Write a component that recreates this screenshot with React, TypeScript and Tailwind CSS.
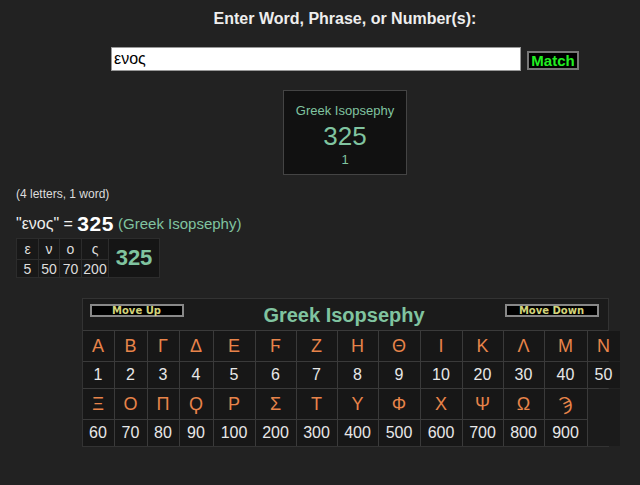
import React from "react";

const top1 = [
  ["Α", "1"], ["Β", "2"], ["Γ", "3"], ["Δ", "4"], ["Ε", "5"], ["Ϝ", "6"], ["Ζ", "7"],
  ["Η", "8"], ["Θ", "9"], ["Ι", "10"], ["Κ", "20"], ["Λ", "30"], ["Μ", "40"], ["Ν", "50"],
];
const top2 = [
  ["Ξ", "60"], ["Ο", "70"], ["Π", "80"], ["Ϙ", "90"], ["Ρ", "100"], ["Σ", "200"], ["Τ", "300"],
  ["Υ", "400"], ["Φ", "500"], ["Χ", "600"], ["Ψ", "700"], ["Ω", "800"], ["Ϡ", "900"],
];

export default function App() {
  const font = { fontFamily: '"Liberation Sans", Arial, "DejaVu Sans", sans-serif' };
  const btnFont = { fontFamily: '"DejaVu Sans", Verdana, sans-serif' };
  return (
    <div className="min-h-[485px] w-[640px] bg-[#222222] text-[#dddddd]" style={font}>
      <div className="flex flex-col items-center pl-[50px] pt-[10px]">
        <div className="text-[16px] font-bold leading-[18px] text-[#eeeeee]">Enter Word, Phrase, or Number(s):</div>
        <div className="mt-[19px] flex items-center gap-[6px]">
          <div className="flex h-[24px] w-[410px] items-center border border-[#999] bg-white pl-[2px] text-[16px] text-black">
            ενος
          </div>
          <div className="mt-[2px] flex h-[19px] w-[52px] items-center justify-center border-2 border-[#777] bg-black text-[15px] font-bold leading-none text-[#22ee22]">
            Match
          </div>
        </div>
        <div className="mt-[19px] flex h-[85px] w-[124px] flex-col items-center border border-[#444] bg-[#111111] pt-[13px] text-[#80c4a0]">
          <div className="text-[13px] leading-[14px]">Greek Isopsephy</div>
          <div className="mt-[4px] text-[26px] leading-[28px]">325</div>
          <div className="mt-[2px] text-[13px] leading-[15px]">1</div>
        </div>
      </div>

      <div className="pl-[16px]">
        <div className="mt-[12px] text-[12px] leading-[14px] text-[#dddddd]">(4 letters, 1 word)</div>
        <div className="mt-[11px] flex h-[24px] items-center whitespace-pre text-[16px] text-[#eeeeee]">
          <span>"ενος" = </span>
          <span className="text-[21px] font-bold tracking-[0.5px] text-white">325</span>
          <span className="text-[15px] text-[#80c4a0]"> (Greek Isopsephy)</span>
        </div>
        <div className="mt-[2px] grid w-[144px] grid-cols-[21px_20px_21px_26px_1fr] grid-rows-[20px_17px] gap-px bg-[#2c2c2c] p-px text-[14px] leading-none text-[#dddddd]">
          <div className="flex items-center justify-center bg-[#181818]">ε</div>
          <div className="flex items-center justify-center bg-[#181818]">ν</div>
          <div className="flex items-center justify-center bg-[#181818]">ο</div>
          <div className="flex items-center justify-center bg-[#181818]">ς</div>
          <div className="row-span-2 flex items-center justify-center bg-[#151515] text-[22px] font-bold text-[#80c4a0]">325</div>
          <div className="flex items-center justify-center bg-[#181818]">5</div>
          <div className="flex items-center justify-center bg-[#181818]">50</div>
          <div className="flex items-center justify-center bg-[#181818]">70</div>
          <div className="flex items-center justify-center bg-[#181818]">200</div>
        </div>
      </div>

      <div className="flex justify-center pl-[50px]">
        <div className="mt-[20px] w-[527px] border border-[#333] bg-[#1b1b1b]">
          <div className="flex h-[32px] items-start justify-between border-b border-[#3a3a3a] pl-[7px] pr-[9px]">
            <div className="mt-[5px] flex h-[13px] w-[94px] items-center justify-center border-2 border-[#888] bg-black text-[10px] font-bold leading-none text-[#d4d47a]" style={btnFont}>
              Move Up
            </div>
            <div className="self-center text-[20px] font-bold leading-none text-[#80c4a0]">Greek Isopsephy</div>
            <div className="mt-[5px] flex h-[13px] w-[94px] items-center justify-center border-2 border-[#888] bg-black text-[10px] font-bold leading-none text-[#d4d47a]" style={btnFont}>
              Move Down
            </div>
          </div>
          <div className="grid grid-cols-[31px_32px_31px_33px_41px_40px_40px_40px_41px_41px_40px_40px_42px_32px] grid-rows-[30px_26px_30px_26px] gap-px bg-[#3a3a3a]">
            {top1.map(([l]) => (
              <div key={"a" + l} className="flex items-center justify-center bg-[#171717] text-[18px] text-[#e8844a]">{l}</div>
            ))}
            {top1.map(([l, v]) => (
              <div key={"b" + l} className="flex items-center justify-center bg-[#171717] text-[16px] text-[#e8e8e8]">{v}</div>
            ))}
            {top2.map(([l]) => (
              <div key={"c" + l} className="flex items-center justify-center bg-[#171717] text-[18px] text-[#e8844a]">{l}</div>
            ))}
            <div className="row-span-2 bg-[#1b1b1b]" />
            {top2.map(([l, v]) => (
              <div key={"d" + l} className="flex items-center justify-center bg-[#171717] text-[16px] text-[#e8e8e8]">{v}</div>
            ))}
          </div>
        </div>
      </div>
    </div>
  );
}
